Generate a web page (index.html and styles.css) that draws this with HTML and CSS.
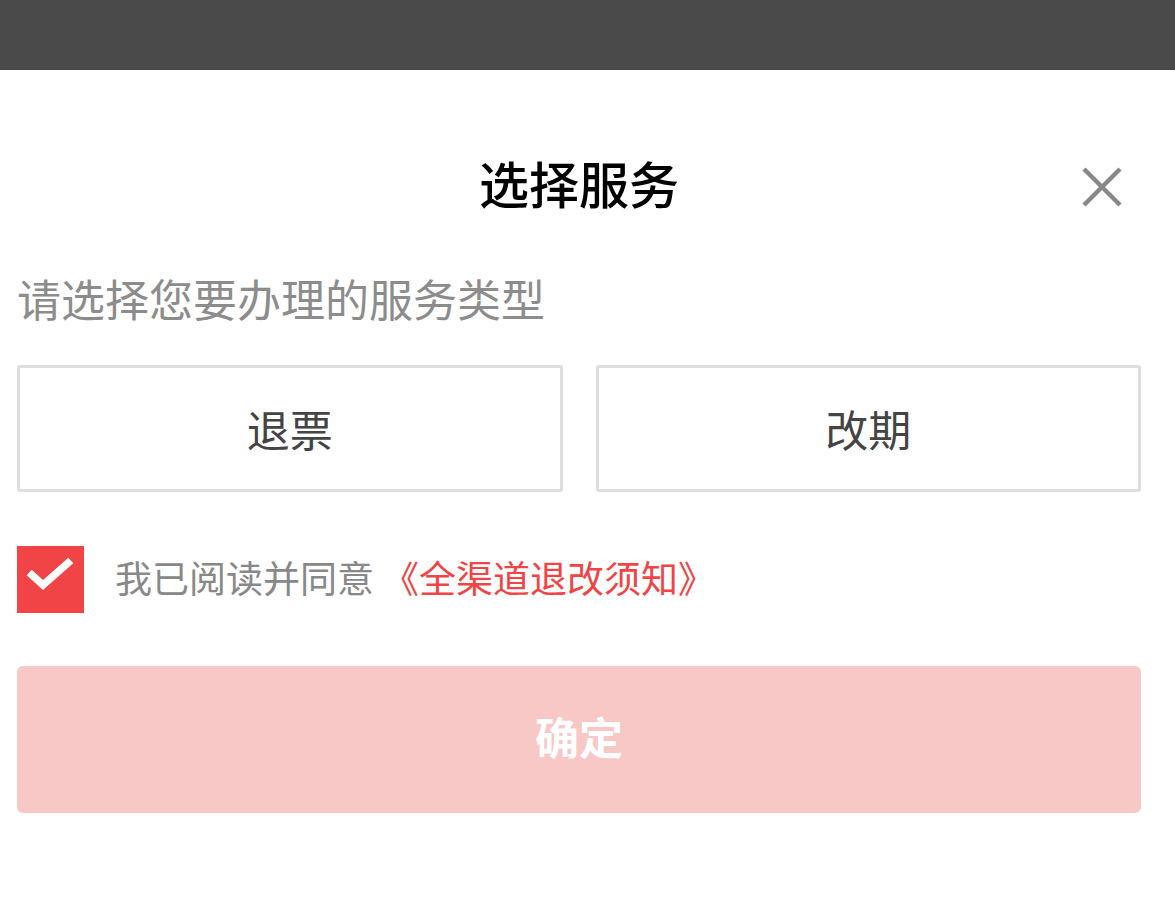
FILE: index.html
```html
<!DOCTYPE html>
<html lang="zh-CN">
<head>
<meta charset="utf-8">
<title>选择服务</title>
<link rel="stylesheet" href="styles.css">
</head>
<body>
<div class="topbar"></div>
<div class="sheet">
  <div class="header">
    <h1 class="title">选择服务</h1>
    <button class="close" aria-label="关闭">
      <svg width="40" height="40" viewBox="0 0 40 40"><path d="M2 2 L38 38 M38 2 L2 38" stroke="#888" stroke-width="4.5" fill="none"/></svg>
    </button>
  </div>
  <p class="subtitle">请选择您要办理的服务类型</p>
  <div class="options">
    <div class="option">退票</div>
    <div class="option">改期</div>
  </div>
  <div class="agree">
    <span class="checkbox">
      <svg width="67" height="67" viewBox="0 0 67 67"><path d="M15 29 L26 39 L51 17" stroke="#fff" stroke-width="7.5" fill="none" stroke-linecap="square"/></svg>
    </span>
    <span class="agree-text">我已阅读并同意</span>
    <span class="agree-link">《全渠道退改须知》</span>
  </div>
  <button class="confirm">确定</button>
</div>
</body>
</html>
```

FILE: styles.css
```css
* { box-sizing: border-box; }
html, body { margin: 0; padding: 0; background: #fff; }
body {
  font-family: "Noto Sans CJK SC", "Noto Sans", sans-serif;
  width: 1175px;
}
.topbar {
  height: 70px;
  background: #4a4a4a;
}
.sheet {
  padding: 76px 34px 0 17px;
}
.header {
  position: relative;
  height: 80px;
  display: flex;
  align-items: center;
  justify-content: center;
}
.title {
  margin: 0 0 8px 0;
  font-size: 50px;
  font-weight: 500;
  color: #000;
  line-height: 72px;
}
.close {
  position: absolute;
  right: 0;
  top: 21px;
  width: 40px;
  height: 40px;
  padding: 0;
  border: none;
  background: none;
  margin-right: 19px;
}
.close svg { display: block; }
.subtitle {
  margin: 42px 0 0 0;
  font-size: 44px;
  line-height: 60px;
  color: #8c8c8c;
  padding-bottom: 2px;
}
.options {
  margin-top: 35px;
  display: grid;
  grid-template-columns: 1fr 1fr;
  gap: 33px;
}
.option {
  height: 127px;
  border: 3px solid #dedede;
  border-radius: 3px;
  display: flex;
  align-items: center;
  justify-content: center;
  font-size: 43px;
  color: #444;
  padding-bottom: 2px;
}
.agree {
  margin-top: 54px;
  display: flex;
  align-items: center;
  height: 67px;
}
.checkbox {
  width: 67px;
  height: 67px;
  background: #f04447;
  flex: none;
}
.checkbox svg { display: block; }
.agree-text {
  margin-left: 31px;
  font-size: 37px;
  color: #888;
  margin-bottom: 5px;
}
.agree-link {
  margin-left: 8px;
  font-size: 37px;
  color: #f04447;
  margin-bottom: 5px;
}
.confirm {
  display: flex;
  align-items: center;
  justify-content: center;
  margin-top: 53px;
  width: 100%;
  height: 147px;
  border: none;
  border-radius: 6px;
  background: #f8c8c7;
  color: #fff;
  font-family: inherit;
  font-size: 44px;
  font-weight: 700;
  padding: 0 0 8px 0;
}
```
